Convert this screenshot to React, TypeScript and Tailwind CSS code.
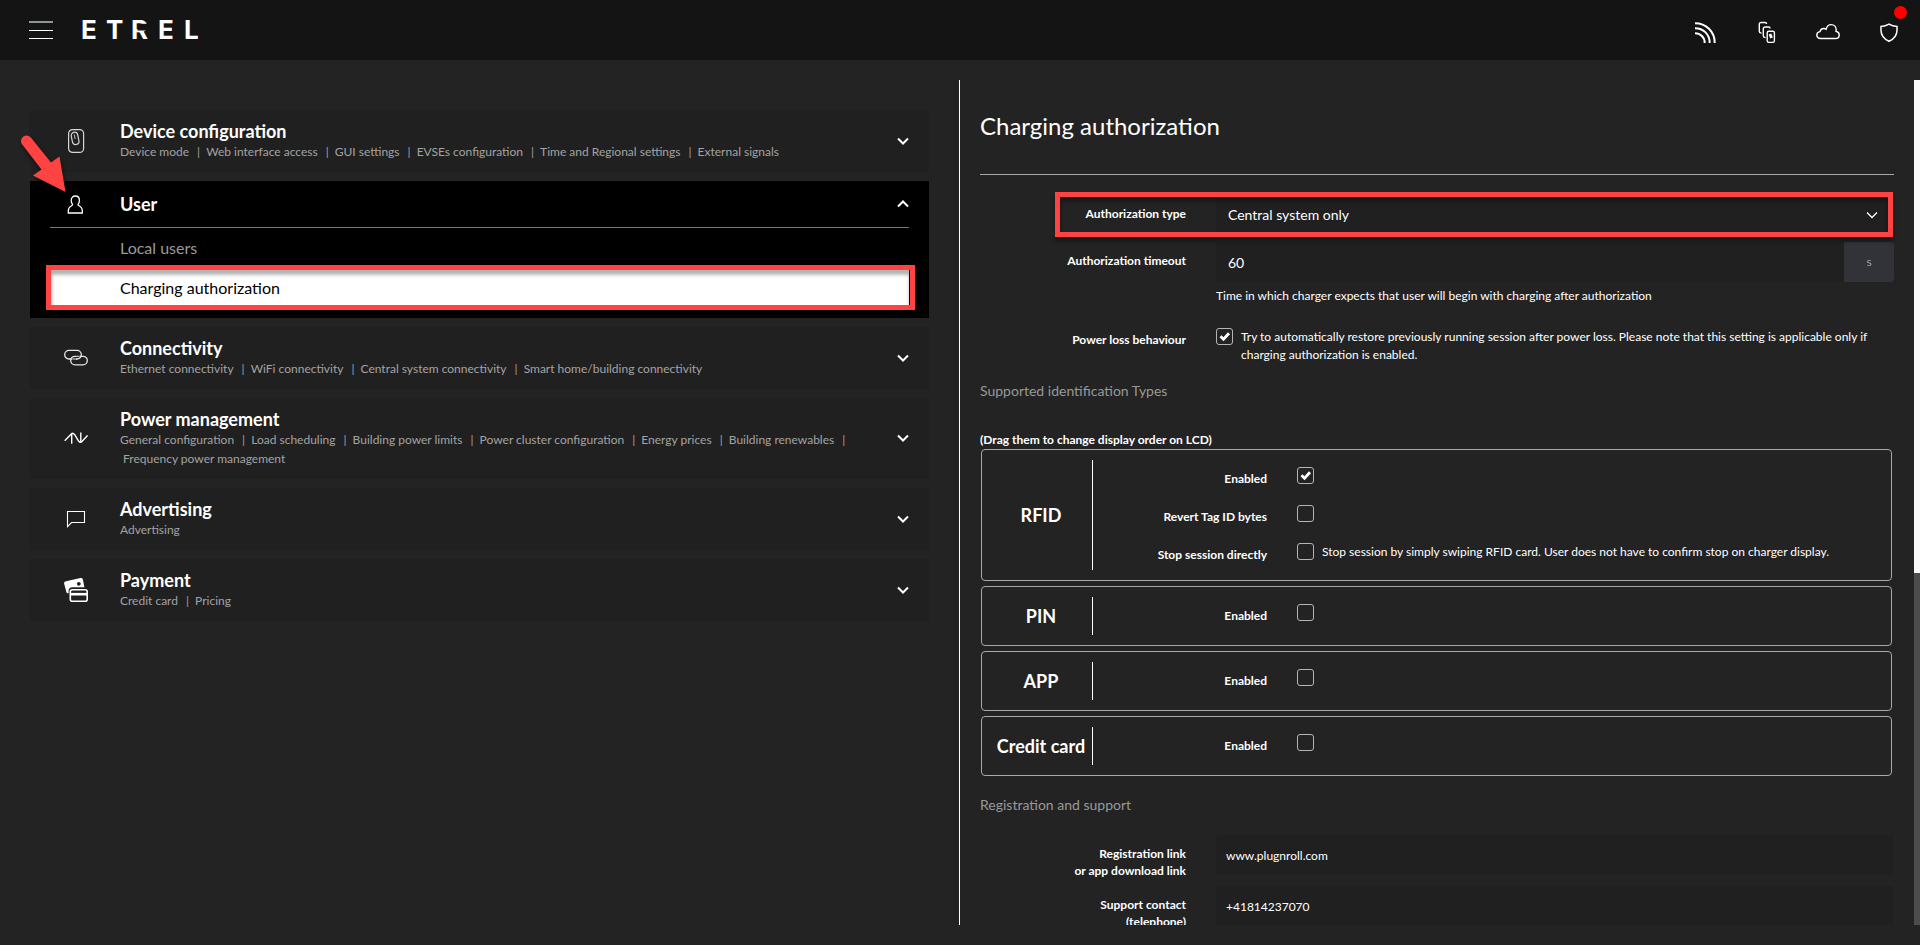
import { useState } from 'react';
import type { ReactNode } from 'react';
import clsx from 'clsx';

type Section = {
    title: string;
    icon: ReactNode;
    links: string[];
};

const DeviceIcon = () => (
    <svg width="24" height="24" viewBox="0 0 24 24" fill="none" stroke="#d4d8d4" strokeWidth="1.2">
        <rect x="4.6" y="0.6" width="15" height="22.8" rx="4" />
        <rect x="7.8" y="3.2" width="6.6" height="12.4" rx="3.3" transform="rotate(-12 11 9.5)" />
        <path d="M10.200 5.500l1 4.500" strokeWidth="0.900" />
    </svg>
);

const UserIcon = () => (
    <svg width="24" height="24" viewBox="0 0 24 24" fill="none" stroke="#fff" strokeWidth="1.3">
        <path d="M4.3 21v-2.200c0-3 1.800-4.300 3.600-5.300.7-.4.8-1 .4-1.700C7.500 10.800 7.200 9.700 7.200 8.400c0-2.700 1.800-4.400 4.100-4.400s4.100 1.700 4.100 4.400c0 1.300-.3 2.400-1.100 3.400-.4.7-.3 1.300.4 1.700 1.800 1 3.600 2.300 3.600 5.300v2.200z" />
    </svg>
);

const LinkIcon = () => (
    <svg width="24" height="24" viewBox="0 0 24 24" fill="none" stroke="#e6e6e6" strokeWidth="1.3">
        <path d="M8.5 13H5a4.300 4.300 0 0 1 0-8.600h8a4.300 4.300 0 0 1 0 8.600h-1" />
        <path d="M15.500 10.300h3.500a4.300 4.300 0 0 1 0 8.600H11a4.300 4.300 0 0 1 0-8.600h1" />
        <path d="M9 13h4M12 10.300h3" strokeWidth="1" />
    </svg>
);

const PowerIcon = () => (
    <svg width="24" height="24" viewBox="0 0 24 24" fill="none" stroke="#fff" strokeWidth="1.4">
        <path d="M0.700 14.800L7.500 7.700c1.300-1 2.600 0 3.700 1.700l2.300 4c1.300 2.200 2.600 3.500 4 2.500l6-6.500" />
        <path d="M7.700 7.500v10.200M16.800 6.500v10" />
    </svg>
);

const ChatIcon = () => (
    <svg width="24" height="24" viewBox="0 0 24 24" fill="none" stroke="#fff" strokeWidth="1.1">
        <path d="M3.500 4.500h17v11H7.500l-4 4.200z" />
    </svg>
);

const CardsIcon = () => (
    <svg width="24" height="24" viewBox="0 0 24 24">
        <path fill="#fff" d="M2 3.200L16.500.1c1.200-.2 2.200.4 2.400 1.500l1.500 7.600H8.300c-2.300 0-3.700 1.300-3.700 3.300v2.700c-1.200.1-2-.4-2.300-1.500L.1 5.600C-.2 4.400.7 3.500 2 3.200z" />
        <circle cx="14.800" cy="5.800" r="1.900" fill="#212121" />
        <rect x="6.300" y="11.700" width="16.900" height="11.500" rx="2" fill="none" stroke="#fff" strokeWidth="1.600" />
        <path d="M6.500 16.200h16.500" stroke="#fff" strokeWidth="2.600" />
    </svg>
);

const sections: Section[] = [
    {
        title: 'Device configuration',
        icon: <DeviceIcon />,
        links: ['Device mode', 'Web interface access', 'GUI settings', 'EVSEs configuration', 'Time and Regional settings', 'External signals'],
    },
    { title: 'User', icon: <UserIcon />, links: ['Local users', 'Charging authorization'] },
    {
        title: 'Connectivity',
        icon: <LinkIcon />,
        links: ['Ethernet connectivity', 'WiFi connectivity', 'Central system connectivity', 'Smart home/building connectivity'],
    },
    {
        title: 'Power management',
        icon: <PowerIcon />,
        links: [
            'General configuration',
            'Load scheduling',
            'Building power limits',
            'Power cluster configuration',
            'Energy prices',
            'Building renewables',
            'Frequency power management',
        ],
    },
    { title: 'Advertising', icon: <ChatIcon />, links: ['Advertising'] },
    { title: 'Payment', icon: <CardsIcon />, links: ['Credit card', 'Pricing'] },
];

const methods = [
    {
        name: 'RFID',
        options: [
            { label: 'Enabled', on: true },
            { label: 'Revert Tag ID bytes' },
            {
                label: 'Stop session directly',
                hint: 'Stop session by simply swiping RFID card. User does not have to confirm stop on charger display.',
            },
        ],
    },
    { name: 'PIN', options: [{ label: 'Enabled' }] },
    { name: 'APP', options: [{ label: 'Enabled' }] },
    { name: 'Credit card', options: [{ label: 'Enabled' }] },
] as { name: string; options: { label: string; on?: boolean; hint?: string }[] }[];

function Chevron({ up = false, thin = false }: { up?: boolean; thin?: boolean }) {
    return (
        <svg width="12" height="8" viewBox="0 0 12 8" fill="none" stroke="#fff" strokeWidth={thin ? 1.3 : 2}>
            <path d={up ? 'M1 6.500l5-5 5 5' : 'M1 1.500l5 5 5-5'} />
        </svg>
    );
}

function Checkbox({ id, on = false }: { id: string; on?: boolean }) {
    return (
        <span className="relative block size-[17px] shrink-0">
            <input
                id={id}
                type="checkbox"
                defaultChecked={on}
                className="peer block size-[17px] appearance-none rounded-[3px] border border-[#b5b5b5]"
            />
            <svg
                className="pointer-events-none absolute inset-0 hidden peer-checked:block"
                width="17"
                height="17"
                viewBox="0 0 17 17"
                fill="none"
                stroke="#fff"
                strokeWidth="2.800"
            >
                <path d="M4.500 8.200l3 3 5.500-6" />
            </svg>
        </span>
    );
}

/* Red frame that marks a row */
const Marker = ({ className }: { className: string }) => (
    <div className={clsx('pointer-events-none absolute border-5 border-[#ff4343] drop-shadow-[0_4px_2px_rgba(0,0,0,0.4)]', className)} />
);

function Header() {
    return (
        <header className="flex h-[60px] shrink-0 items-center bg-[#141414] pr-[19px] pl-[29px]">
            <button aria-label="Menu" className="flex h-[18px] w-6 flex-col justify-between">
                <span className="h-[2px] w-full bg-[#8e988e]" />
                <span className="h-px w-full bg-white" />
                <span className="h-px w-full bg-white" />
            </button>
            <a href="#" aria-label="Etrel" className="ml-[29px] pb-px">
                <svg width="120" height="32" viewBox="0 0 120 32" className="overflow-visible font-['Inter',sans-serif] text-[26px] font-bold">
                    <text x="-1 24 49 76 102" y="25" fill="#fff">ETREL</text>
                    {/* open bowl of the R */}
                    <path d="M55.500 9.800H69V16.500H55.500z" fill="#141414" />
                </svg>
            </a>
            <div className="ml-auto flex items-center gap-[37px] pt-1">
                <button aria-label="Signal">
                    <svg width="24" height="24" viewBox="0 0 24 24" fill="none" stroke="#fff" strokeWidth="2">
                        <path d="M1 3.300c11 0 19.700 8.200 19.700 19.700M1 8.300c8.500 0 14.700 6 14.700 14.700M1 13.300c5.500 0 9.700 4 9.700 9.700" />
                    </svg>
                </button>
                <button aria-label="Chargers">
                    <svg width="24" height="24" viewBox="0 0 24 24" fill="none" stroke="#fff" strokeWidth="1.400">
                        <path d="M6.500 13H6a1.700 1.700 0 0 1-1.700-1.700v-7C4.300 3.200 5 2.500 6 2.500h4c1 0 1.600.5 1.600 1.500" />
                        <path d="M10.500 17.500H10a1.700 1.700 0 0 1-1.700-1.700v-7C8.300 7.700 9 7 10 7h3.500c1 0 1.600.5 1.600 1.500" />
                        <rect x="12.200" y="11.200" width="7.200" height="11.200" rx="1.600" />
                        <path d="M15 14l1.500 4" strokeWidth="2.800" />
                    </svg>
                </button>
                <button aria-label="Cloud">
                    <svg width="24" height="24" viewBox="0 0 24 24" fill="none" stroke="#fff" strokeWidth="1.400">
                        <path d="M4.500 18.500C2.300 18.500.8 17 .8 15c0-1.900 1.300-3.200 3.200-3.400C4.500 9.600 6 8.300 8 8.500c.9.100 1.500.3 2.100.8C10.800 6.500 12.800 4.600 15.200 4.600c2.800 0 5 2.200 5 5.200 0 .6-.1 1-.2 1.600 2 .3 3.200 1.700 3.200 3.500 0 2.100-1.500 3.600-3.700 3.600z" />
                    </svg>
                </button>
                <button aria-label="Security" className="relative">
                    <svg width="24" height="24" viewBox="0 0 24 24" fill="none" stroke="#fff" strokeWidth="1.500">
                        <path d="M12 4.200c2.400 1.500 5 2.200 8 2.200v3.800c0 5-2.700 8.600-8 11.100-5.300-2.500-8-6.100-8-11.100V6.400c3 0 5.600-.7 8-2.200z" />
                    </svg>
                    <span className="absolute -top-3.5 right-[-6px] size-[13px] rounded-full bg-[#ff0000]" />
                </button>
            </div>
        </header>
    );
}

function SectionCard({ section, open, onToggle }: { section: Section; open: boolean; onToggle: () => void }) {
    if (open) {
        return (
            <section className="bg-black px-5 pb-2.5">
                <button onClick={onToggle} className="flex h-[47px] w-full items-center border-b border-[#777] text-left">
                    <span className="flex w-[70px] justify-center pr-[19px]">{section.icon}</span>
                    <span className="flex-1 text-lg font-bold text-white">{section.title}</span>
                    <Chevron up />
                </button>
                {section.links.map((link) => (
                    <div key={link} className="relative">
                        <a
                            href="#"
                            className={clsx(
                                'flex h-10 items-center pl-[70px] text-base',
                                link === 'Charging authorization' ? 'bg-white text-black' : 'text-[#9b9b9b]'
                            )}
                        >
                            {link}
                        </a>
                        {link === 'Charging authorization' && <Marker className="-top-[3px] -right-1.5 -bottom-0.5 -left-1" />}
                    </div>
                ))}
            </section>
        );
    }

    return (
        <section className="flex items-center bg-[#202020] px-5 pt-2.5 pb-[11px]">
            <span className="flex w-[70px] shrink-0 justify-center pr-[19px]">{section.icon}</span>
            <div className="flex-1 pr-8">
                <h2 className="text-lg leading-[22px] font-bold text-white">{section.title}</h2>
                <p className="text-xs leading-[19px] text-[#a3a3a3]">
                    {section.links.map((link, i) => (
                        <span key={link}>
                            <span className="whitespace-nowrap">
                                <a href="#" className={clsx(i > 0 && 'pl-[3px]')}>{link}</a>
                                {i < section.links.length - 1 && <span className="pl-2">|</span>}
                            </span>{' '}
                        </span>
                    ))}
                </p>
            </div>
            <button onClick={onToggle} aria-label={'Open ' + section.title}>
                <Chevron />
            </button>
        </section>
    );
}

type FieldProps = { label: ReactNode; id: string; compact?: boolean; children: ReactNode };

function Field({ label, id, compact = false, children }: FieldProps) {
    return (
        <div className="-mx-[15px] flex">
            <label
                htmlFor={id}
                className={clsx('w-1/4 px-[15px] text-right text-xs leading-[17px] font-bold', compact ? 'pt-[3px]' : 'pt-2.5')}
            >
                {label}
            </label>
            <div className="w-3/4 px-[15px]">{children}</div>
        </div>
    );
}

function AuthorizationForm() {
    return (
        <form className="flex-1 overflow-hidden pr-5 pl-5 text-white">
            <h1 className="border-b border-[#a8a8a8] pt-[30px] pb-8 text-2xl leading-8">Charging authorization</h1>

            <div className="relative mt-5">
                <Field label="Authorization type" id="type">
                    <div className="relative">
                        <select id="type" className="block h-10 w-full appearance-none rounded bg-[#202020] px-3 text-sm">
                            <option>Central system only</option>
                            <option>Local only</option>
                        </select>
                        <span className="pointer-events-none absolute top-4 right-4">
                            <Chevron thin />
                        </span>
                    </div>
                </Field>
                <Marker className="-top-[3px] right-px -bottom-0.5 left-[75px]" />
            </div>

            <div className="mt-[7px]">
                <Field label="Authorization timeout" id="timeout">
                    <div className="flex">
                        <input id="timeout" defaultValue="60" className="h-10 min-w-0 flex-1 rounded-l bg-[#202020] px-3 text-sm" />
                        <span className="flex w-[50px] items-center justify-center rounded-r bg-[#323239] text-xs text-[#a0a0a0]">s</span>
                    </div>
                    <p className="mt-[5px] text-xs leading-[18px]">
                        Time in which charger expects that user will begin with charging after authorization
                    </p>
                </Field>
            </div>

            <div className="mt-[23px]">
                <Field label="Power loss behaviour" id="power-loss" compact>
                    <div className="flex gap-2">
                        <Checkbox id="power-loss" on />
                        <p className="text-xs leading-[18px]">
                            Try to automatically restore previously running session after power loss. Please note that this setting is
                            applicable only if charging authorization is enabled.
                        </p>
                    </div>
                </Field>
            </div>

            <h2 className="mt-[17px] text-sm leading-5 text-[#999]">Supported identification Types</h2>
            <p className="mt-[31px] mb-px text-xs leading-4 font-bold">(Drag them to change display order on LCD)</p>

            <div className="mr-0.5 ml-px flex flex-col gap-[5px]">
                {methods.map((method) => (
                    <div key={method.name} className="flex rounded border border-[#a8a8a8] py-2.5">
                        <div className="flex w-[111px] shrink-0 items-center justify-center border-r border-white pl-2 text-lg leading-6 font-bold">
                            {method.name}
                        </div>
                        <div className="flex min-h-[38px] flex-1 flex-col gap-1">
                            {method.options.map((option) => {
                                const id = method.name + option.label;
                                return (
                                    <div key={option.label} className="flex h-[34px] pt-[7px]">
                                        <label htmlFor={id} className="w-[174px] pt-[3px] text-right text-xs leading-[17px] font-bold">
                                            {option.label}
                                        </label>
                                        <div className="flex gap-2 pl-[30px]">
                                            <Checkbox id={id} on={option.on} />
                                            {option.hint && <p className="text-xs leading-[18px]">{option.hint}</p>}
                                        </div>
                                    </div>
                                );
                            })}
                        </div>
                    </div>
                ))}
            </div>

            <h2 className="mt-[19px] text-sm leading-5 text-[#999]">Registration and support</h2>
            <div className="mt-5 flex flex-col gap-[7px]">
                <Field label={<>Registration link<br />or app download link</>} id="link">
                    <input id="link" defaultValue="www.plugnroll.com" className="block h-10 w-full rounded bg-[#202020] px-2.5 text-xs" />
                </Field>
                <Field label={<>Support contact<br />(telephone)</>} id="phone">
                    <input id="phone" defaultValue="+41814237070" className="block h-10 w-full rounded bg-[#202020] px-2.5 text-xs" />
                </Field>
            </div>
        </form>
    );
}

export default function App() {
    const [openSection, setOpenSection] = useState('User');

    return (
        <div className="flex h-screen flex-col overflow-hidden bg-[#232323] font-['Lato',sans-serif]">
            <Header />
            <main className="flex min-h-0 flex-1 py-5">
                <nav className="relative flex w-1/2 flex-col gap-[9px] border-r border-white px-[30px] pt-[30px]">
                    {sections.map((section) => (
                        <SectionCard
                            key={section.title}
                            section={section}
                            open={openSection === section.title}
                            onToggle={() => setOpenSection(openSection === section.title ? '' : section.title)}
                        />
                    ))}
                    <svg
                        className="pointer-events-none absolute top-[50px] left-4 drop-shadow-[1px_3px_2px_rgba(0,0,0,0.5)]"
                        width="56"
                        height="66"
                        viewBox="0 0 56 66"
                        fill="#ff4343"
                    >
                        <path d="M6 14.300A5.500 5.500 0 0 1 15.200 8L35 32.500 43.500 26.500 49.500 62 17 45.500 25.500 39.500z" />
                    </svg>
                </nav>
                <div className="flex w-1/2">
                    <AuthorizationForm />
                    <div className="w-1.5 bg-[#4c4c4c]">
                        <div className="h-7/12 bg-[#f8f8f6]" />
                    </div>
                </div>
            </main>
        </div>
    );
}
